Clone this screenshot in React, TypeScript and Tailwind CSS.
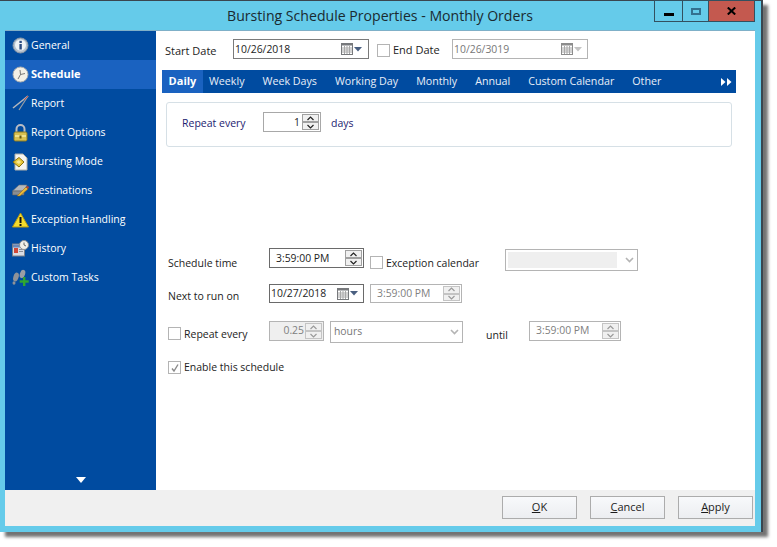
import type { ReactNode } from 'react';

const tabs = ['Weekly', 'Week Days', 'Working Day', 'Monthly', 'Annual', 'Custom Calendar', 'Other'];

function GeneralIcon() {
  return (
    <svg width="17" height="17" viewBox="0 0 17 17">
      <circle cx="8.5" cy="8.5" r="7.5" fill="#b4c0cc" stroke="#8a98a8" />
      <circle cx="8.5" cy="8" r="5.5" fill="#eef2f6" />
      <rect x="7.4" y="7" width="2.4" height="5.5" fill="#2a4a80" />
      <rect x="7.4" y="3.8" width="2.4" height="2.2" fill="#2a4a80" />
    </svg>
  );
}

function ClockIcon() {
  return (
    <svg width="17" height="17" viewBox="0 0 17 17">
      <circle cx="8.5" cy="8.5" r="7.5" fill="#f4f0e6" stroke="#a8acb0" />
      <path d="M8.5 8.5 L8 4 M8.5 8.5 L13 7.5 M8.5 8.5 L6 13" stroke="#5a5a5a" strokeWidth="0.8" fill="none" />
    </svg>
  );
}

function ReportIcon() {
  return (
    <svg width="17" height="17" viewBox="0 0 17 17">
      <path d="M16 1 L1 13" stroke="#b4b8bc" strokeWidth="1.6" />
      <path d="M16 1 L7 15" stroke="#9a9ea2" strokeWidth="1.2" />
      <path d="M16 1 L12 5" stroke="#c05050" strokeWidth="1" />
    </svg>
  );
}

function LockIcon() {
  return (
    <svg width="17" height="18" viewBox="0 0 17 18">
      <path d="M4.5 9 V5 a4 4 0 0 1 8 0 V9" fill="none" stroke="#b8bcc4" strokeWidth="2" />
      <rect x="2" y="8" width="13" height="9" rx="1.5" fill="#d8c050" stroke="#8a7a20" />
      <rect x="3" y="11" width="11" height="2" fill="#efe08a" />
      <rect x="7.5" y="11.5" width="2" height="3" fill="#6a5a10" />
    </svg>
  );
}

function BurstIcon() {
  return (
    <svg width="17" height="18" viewBox="0 0 17 18">
      <path d="M3 1 H11 L15 5 V17 H3 Z" fill="#f4f4f0" stroke="#b0b0a8" />
      <path d="M1 9 L7 4.5 L12 9 L7 14 Z" fill="#e8c838" stroke="#8a7010" />
      <path d="M4 9 L7 7 L9 9 L7 11 Z" fill="#f8e890" />
    </svg>
  );
}

function DestIcon() {
  return (
    <svg width="17" height="15" viewBox="0 0 17 15">
      <path d="M0.5 8 L7 2 H15 L12 8 Z" fill="#b4b8bc" stroke="#6a6e72" strokeWidth="0.6" />
      <path d="M0.5 8 H12 V12 H0.5 Z" fill="#8a8e92" stroke="#5a5e62" strokeWidth="0.6" />
      <path d="M5 13 L14 4 L16 6 L8 13 Z" fill="#e8b838" stroke="#8a6010" strokeWidth="0.5" />
      <path d="M14 4 L16 6 L17 4 L15.5 3 Z" fill="#c04030" />
    </svg>
  );
}

function WarnIcon() {
  return (
    <svg width="17" height="16" viewBox="0 0 17 16">
      <path d="M8.5 1 L16.5 15 H0.5 Z" fill="#f6dc2c" stroke="#b89a10" strokeLinejoin="round" />
      <rect x="7.5" y="5" width="2" height="6" fill="#111" />
      <rect x="7.5" y="12" width="2" height="2" fill="#111" />
    </svg>
  );
}

function HistoryIcon() {
  return (
    <svg width="17" height="17" viewBox="0 0 17 17">
      <rect x="0.5" y="4" width="12" height="12" fill="#d8dce4" stroke="#7a8088" />
      <rect x="1" y="4.5" width="11" height="3" fill="#6a88b8" />
      <rect x="2" y="8" width="4" height="5" fill="#d04838" />
      <rect x="7" y="9" width="4" height="1" fill="#8a8e98" />
      <rect x="7" y="11" width="4" height="1" fill="#8a8e98" />
      <circle cx="12" cy="5" r="4.5" fill="#f0f0ea" stroke="#8a8e92" />
      <path d="M12 2.5 V5 L14 6" fill="none" stroke="#444" strokeWidth="0.8" />
    </svg>
  );
}

function TasksIcon() {
  return (
    <svg width="17" height="17" viewBox="0 0 17 17">
      <ellipse cx="4" cy="8" rx="2.6" ry="4.5" transform="rotate(18 4 8)" fill="#8e9298" />
      <ellipse cx="10.5" cy="5" rx="2.6" ry="4.2" transform="rotate(18 10.5 5)" fill="#9a9ea4" />
      <ellipse cx="2" cy="14" rx="1.5" ry="1.8" fill="#8e9298" />
      <rect x="11" y="8" width="2.4" height="9" fill="#2fa82f" />
      <rect x="7.7" y="11.3" width="9" height="2.4" fill="#2fa82f" />
    </svg>
  );
}

const navItems: { label: string; icon: ReactNode }[] = [
  { label: 'General', icon: <GeneralIcon /> },
  { label: 'Schedule', icon: <ClockIcon /> },
  { label: 'Report', icon: <ReportIcon /> },
  { label: 'Report Options', icon: <LockIcon /> },
  { label: 'Bursting Mode', icon: <BurstIcon /> },
  { label: 'Destinations', icon: <DestIcon /> },
  { label: 'Exception Handling', icon: <WarnIcon /> },
  { label: 'History', icon: <HistoryIcon /> },
  { label: 'Custom Tasks', icon: <TasksIcon /> },
];

function CalIcon({ off }: { off?: boolean }) {
  const c = off ? '#8c8c8c' : '#77797c';
  return (
    <svg width="12" height="12" viewBox="0 0 12 12" className="shrink-0">
      <rect x="0.5" y="0.5" width="11" height="11" fill="#fff" stroke={c} />
      <rect x="1" y="1" width="10" height="1.5" fill={c} />
      <path d="M1 5 H11 M1 7 H11 M1 9 H11 M3.5 3 V11 M6 3 V11 M8.5 3 V11" stroke="#a8a8a8" strokeWidth="1" />
    </svg>
  );
}

function DownTri({ off }: { off?: boolean }) {
  return (
    <svg width="8" height="5" viewBox="0 0 8 5" className="ml-[1px] shrink-0">
      <path d="M0 0 H8 L4 4.5 Z" fill={off ? '#c4c4c4' : '#4a5f80'} />
    </svg>
  );
}

function Chev({ up, off }: { up?: boolean; off?: boolean }) {
  return (
    <svg width="7" height="5" viewBox="0 0 7 5">
      <path d={up ? 'M0.5 4 L3.5 1 L6.5 4' : 'M0.5 1 L3.5 4 L6.5 1'} fill="none" stroke={off ? '#9a9a9a' : '#222'} strokeWidth="1.2" />
    </svg>
  );
}

function Spin({ off }: { off?: boolean }) {
  const cell = off
    ? 'flex flex-1 items-center justify-center border border-[#c4c4c4] bg-[#f0f0f0]'
    : 'flex flex-1 items-center justify-center border border-[#a0a0a0] bg-[#f0f0f0]';
  return (
    <div className="mr-px flex h-full w-[17px] shrink-0 flex-col py-px">
      <div className={cell}><Chev up off={off} /></div>
      <div className={cell}><Chev off={off} /></div>
    </div>
  );
}

function Check({ on }: { on?: boolean }) {
  return (
    <div className="flex h-[13px] w-[13px] shrink-0 items-center justify-center border border-[#b4b4b4] bg-white">
      {on && (
        <svg width="10" height="10" viewBox="0 0 10 10">
          <path d="M2 5.5 L4 8 L8 1.5" fill="none" stroke="#8a8a8a" strokeWidth="1.4" />
        </svg>
      )}
    </div>
  );
}

function ChevSelect() {
  return (
    <svg width="9" height="6" viewBox="0 0 9 6" className="shrink-0">
      <path d="M1 1 L4.5 4.5 L8 1" fill="none" stroke="#b4b4b4" strokeWidth="1.6" />
    </svg>
  );
}

export default function App() {
  return (
    <div className="h-[547px] w-[777px] overflow-hidden bg-white font-['Open_Sans','Liberation_Sans',sans-serif] text-[10.5px] text-[#1c1c1c]">
      <div className="flex h-[532px] w-[763px] flex-col border-t border-r-2 border-[#3a4650] bg-[#65cbea] pr-[6px] pl-[5px] shadow-[5px_5px_3px_rgba(0,0,0,0.55)]">
        <div className="relative flex h-[29px] shrink-0 items-center justify-center">
          <span className="mt-[1px] text-[14.1px] text-[#1a2a30]">Bursting Schedule Properties - Monthly Orders</span>
          <div className="absolute top-[-1px] right-0 flex h-[22px] border border-[#33505f]">
            <div className="flex w-[28px] items-center justify-center border-r border-[#33505f]">
              <div className="mt-[6px] h-[3px] w-[10px] bg-black" />
            </div>
            <div className="flex w-[26px] items-center justify-center border-r border-[#33505f]">
              <div className="h-[7px] w-[10px] border-2 border-[#33708f]" />
            </div>
            <div className="flex w-[45px] items-center justify-center bg-[#c4594f]">
              <svg width="9" height="8" viewBox="0 0 9 8">
                <path d="M0.8 0.5 L8.2 7.5 M8.2 0.5 L0.8 7.5" stroke="#000" strokeWidth="2" />
              </svg>
            </div>
          </div>
        </div>

        <div className="flex h-[496px] shrink-0 flex-col border-t border-[#7fb0c8]">
          <div className="flex min-h-0 flex-1">
            <aside className="flex w-[151px] shrink-0 flex-col bg-[#004ba0]">
              {navItems.map((item) => (
                <div
                  key={item.label}
                  className={`flex h-[29px] items-center text-white ${item.label === 'Schedule' ? 'bg-[#1a62c0] text-[11px] font-bold' : ''}`}
                >
                  <div className="flex w-[26px] shrink-0 justify-center pl-[4px]">{item.icon}</div>
                  <span>{item.label}</span>
                </div>
              ))}
              <div className="flex flex-1 items-end justify-center pb-[7px]">
                <svg width="10" height="6" viewBox="0 0 10 6">
                  <path d="M0 0 H10 L5 6 Z" fill="#fff" />
                </svg>
              </div>
            </aside>

            <main className="min-w-0 flex-1 bg-white pt-[8px]">
              <div className="flex h-[20px] items-center pl-[9px]">
                <span className="mt-[4px] w-[68px] text-[11px]">Start Date</span>
                <div className="flex h-[20px] w-[136px] items-center border border-[#7a7a7a] pr-[6px] pl-[1px]">
                  <span className="mt-[1px] flex-1 text-[10.4px]">10/26/2018</span>
                  <CalIcon />
                  <DownTri />
                </div>
                <div className="mt-[2px] ml-[8px]"><Check /></div>
                <span className="mt-[2px] ml-[3px] w-[59px] text-[11px]">End Date</span>
                <div className="flex h-[20px] w-[136px] items-center border border-[#b4b4b4] pr-[5px] pl-[1px] text-[#777]">
                  <span className="mt-[1px] flex-1 text-[10.4px]">10/26/3019</span>
                  <CalIcon off />
                  <DownTri off />
                </div>
              </div>

              <div className="mt-[11px] ml-[6px] flex h-[23px] w-[574px] items-center bg-[#004ba0] text-[10.7px] text-[#e8eef8]">
                <div className="flex h-full w-[41px] items-center justify-center bg-[#1a62c0] text-[11px] font-bold text-white">Daily</div>
                <div className="flex flex-1 items-center gap-[18px] pl-[6px]">
                  {tabs.map((t) => (
                    <span key={t}>{t}</span>
                  ))}
                </div>
                <svg width="11" height="8" viewBox="0 0 11 8" className="mr-[4px]">
                  <path d="M0 0 L4.5 4 L0 8 Z M6 0 L10.5 4 L6 8 Z" fill="#fff" />
                </svg>
              </div>

              <div className="mt-[9px] ml-[10px] flex h-[45px] w-[566px] items-start rounded-[3px] border border-[#d6e0e6] pt-[9px] pl-[15px] text-[#1c1c70]">
                <span className="mt-[4px] w-[81px]">Repeat every</span>
                <div className="flex h-[20px] w-[58px] items-center border border-[#a8a8a8] text-[#1c1c1c]">
                  <span className="mt-[1px] flex-1 pr-[2px] text-right text-[10.4px]">1</span>
                  <Spin />
                </div>
                <span className="mt-[4px] ml-[10px]">days</span>
              </div>

              <div className="mt-[101px] flex h-[20px] items-start pl-[12px]">
                <span className="mt-[8px] w-[101px]">Schedule time</span>
                <div className="flex h-[20px] w-[95px] items-center border border-[#6a6a6a]">
                  <span className="mt-[1px] flex-1 pl-[6px] text-[10.4px]">3:59:00 PM</span>
                  <Spin />
                </div>
                <div className="mt-[8px] ml-[6px]"><Check /></div>
                <span className="mt-[8px] ml-[3px] w-[119px]">Exception calendar</span>
                <div className="mt-[1px] flex h-[22px] w-[133px] items-center border border-[#b4b4b4] pr-[3px] pl-[2px]">
                  <div className="mr-[8px] h-[16px] flex-1 bg-[#efefef]" />
                  <ChevSelect />
                </div>
              </div>

              <div className="mt-[16px] flex h-[19px] items-start pl-[12px]">
                <span className="mt-[5px] w-[101px]">Next to run on</span>
                <div className="flex h-[19px] w-[95px] items-center border border-[#6a6a6a] pr-[5px] pl-[1px]">
                  <span className="mt-[1px] flex-1 text-[10.4px]">10/27/2018</span>
                  <CalIcon />
                  <DownTri />
                </div>
                <div className="ml-[6px] flex h-[19px] w-[92px] items-center border border-[#b4b4b4] text-[#808080]">
                  <span className="mt-[1px] flex-1 pl-[6px] text-[10.4px]">3:59:00 PM</span>
                  <Spin off />
                </div>
              </div>

              <div className="mt-[18px] flex h-[22px] items-start pl-[12px]">
                <div className="mt-[6px]"><Check /></div>
                <span className="mt-[6px] ml-[3px] w-[85px]">Repeat every</span>
                <div className="flex h-[20px] w-[55px] items-center border border-[#b4b4b4] bg-[#efefef] text-[#808080]">
                  <span className="flex-1 pr-[1px] text-right text-[10.4px]">0.25</span>
                  <Spin off />
                </div>
                <div className="ml-[6px] flex h-[22px] w-[133px] items-center border border-[#b4b4b4] pr-[3px] pl-[3px] text-[#777]">
                  <span className="flex-1 text-[10.4px]">hours</span>
                  <ChevSelect />
                </div>
                <span className="mt-[7px] ml-[23px] w-[43px]">until</span>
                <div className="flex h-[20px] w-[92px] items-center border border-[#b4b4b4] text-[#808080]">
                  <span className="flex-1 pl-[6px] text-[10.4px]">3:59:00 PM</span>
                  <Spin off />
                </div>
              </div>

              <div className="mt-[18px] flex h-[13px] items-center pl-[12px]">
                <Check on />
                <span className="ml-[3px]">Enable this schedule</span>
              </div>
            </main>
          </div>

          <footer className="flex h-[36px] shrink-0 items-center justify-end gap-[13px] bg-[#f0f0f0] pr-[2px] text-[11px]">
            <button className="mb-[2px] h-[23px] w-[75px] border border-[#acacac] bg-gradient-to-b from-[#f8f9fb] to-[#eceef1]"><u>O</u>K</button>
            <button className="mb-[2px] h-[23px] w-[75px] border border-[#acacac] bg-gradient-to-b from-[#f8f9fb] to-[#eceef1]"><u>C</u>ancel</button>
            <button className="mb-[2px] h-[23px] w-[75px] border border-[#acacac] bg-gradient-to-b from-[#f8f9fb] to-[#eceef1]"><u>A</u>pply</button>
          </footer>
        </div>
      </div>
    </div>
  );
}
